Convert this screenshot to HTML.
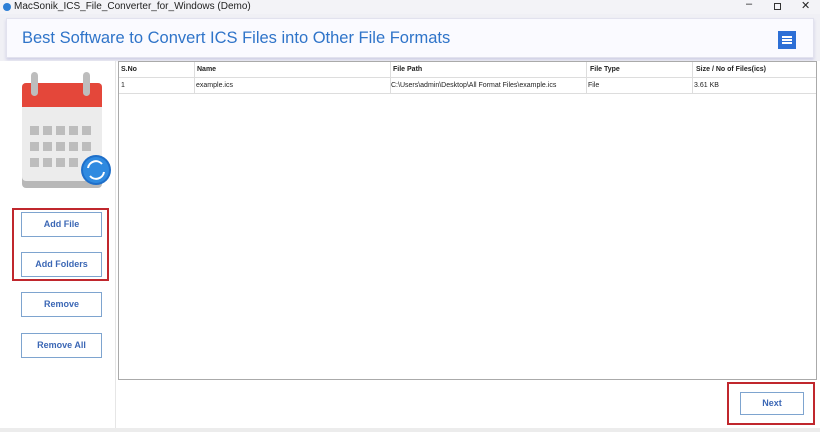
<!DOCTYPE html>
<html><head><style>
*{margin:0;padding:0;box-sizing:border-box}
body{width:820px;height:432px;background:#fff;font-family:"Liberation Sans",Arial,sans-serif;position:relative;overflow:hidden}
.top{position:absolute;left:0;top:0;width:820px;height:61px;background:#f0f0f5}
.tb{position:absolute;left:0;top:0;width:820px;height:14px;background:#f3f3f7;font-size:10px;color:#222}
.tb .t{position:absolute;left:14px;top:1px}
.hdr{position:absolute;left:6px;top:18px;width:808px;height:40px;background:#fafaff;border:1px solid #e2e2ee;box-shadow:0 2px 3px #cfcfe6}
.hdr .h{position:absolute;left:15px;top:10px;font-size:16.5px;color:#2f74c9}
.menu{position:absolute;left:771px;top:12px;width:18px;height:18px;background:#2d6fd6}
.left{position:absolute;left:3px;top:61px;width:113px;height:367px;background:#fff;border-right:1px solid #e6e6e6}
.btn{position:absolute;width:81px;height:25px;background:#fff;border:1px solid #7ea4cf;font-size:9px;font-weight:bold;color:#3b67b5;text-align:center;line-height:23px}
.red{position:absolute;border:2px solid #c0272d}
.tbl{position:absolute;left:118px;top:61px;width:699px;height:319px;background:#fff;border:1px solid #aaa}
.row{position:absolute;left:0;height:16px;width:697px;font-size:7px;color:#222;border-bottom:1px solid #ddd}
.row span{position:absolute;top:4px}
.hd span{font-weight:bold}
.vl{position:absolute;top:0;height:32px;width:1px;background:#ddd}
</style></head><body>
<div class="top"></div>
<div class="tb"><svg style="position:absolute;left:3px;top:3px" width="8" height="8"><circle cx="4" cy="4" r="4" fill="#2d7fd6"/></svg><span class="t">MacSonik_ICS_File_Converter_for_Windows (Demo)</span>
<span style="position:absolute;left:746px;top:-2px;font-size:11px">–</span>
<span style="position:absolute;left:774px;top:3px;width:7px;height:7px;border:1px solid #333"></span>
<span style="position:absolute;left:801px;top:-1px;font-size:11px">✕</span></div>
<div class="hdr"><div class="h">Best Software to Convert ICS Files into Other File Formats</div>
<div class="menu"><div style="position:absolute;left:4px;top:5px;width:10px;height:1.5px;background:#fff;box-shadow:0 3px 0 #fff,0 6px 0 #fff"></div></div></div>
<div class="left">
<svg style="position:absolute;left:16px;top:10px" width="92" height="120" viewBox="0 0 92 120">
<rect x="3" y="12" width="80" height="105" rx="4" fill="#b8b8b8"/>
<rect x="3" y="12" width="80" height="98" rx="4" fill="#ececec"/>
<path d="M3 16a4 4 0 0 1 4-4h72a4 4 0 0 1 4 4v20H3z" fill="#e4473a"/>
<rect x="3" y="32" width="80" height="4" fill="#e4473a"/>
<rect x="12" y="1" width="7" height="24" rx="3.5" fill="#bdbdbd"/>
<rect x="64" y="1" width="7" height="24" rx="3.5" fill="#bdbdbd"/>
<g fill="#bdbdbd">
<rect x="11" y="55" width="9" height="9"/><rect x="24" y="55" width="9" height="9"/><rect x="37" y="55" width="9" height="9"/><rect x="50" y="55" width="9" height="9"/><rect x="63" y="55" width="9" height="9"/>
<rect x="11" y="71" width="9" height="9"/><rect x="24" y="71" width="9" height="9"/><rect x="37" y="71" width="9" height="9"/><rect x="50" y="71" width="9" height="9"/><rect x="63" y="71" width="9" height="9"/>
<rect x="11" y="87" width="9" height="9"/><rect x="24" y="87" width="9" height="9"/><rect x="37" y="87" width="9" height="9"/><rect x="50" y="87" width="9" height="9"/></g>
<circle cx="77" cy="99" r="15" fill="#1f6fc9"/><circle cx="77" cy="99" r="13" fill="#2f8ae0"/>
<path d="M69 97a8 8 0 0 1 14-4M85 101a8 8 0 0 1-14 4" stroke="#fff" stroke-width="2" fill="none"/>
</svg>
<div class="red" style="left:9px;top:147px;width:97px;height:73px"></div>
<div class="btn" style="left:18px;top:151px">Add File</div>
<div class="btn" style="left:18px;top:191px">Add Folders</div>
<div class="btn" style="left:18px;top:231px">Remove</div>
<div class="btn" style="left:18px;top:272px">Remove All</div>
</div>
<div class="tbl">
<div class="row hd" style="top:0"><span style="left:2px">S.No</span><span style="left:78px">Name</span><span style="left:274px">File Path</span><span style="left:471px">File Type</span><span style="left:577px">Size / No of Files(ics)</span></div>
<div class="row" style="top:16px"><span style="left:2px">1</span><span style="left:77px">example.ics</span><span style="left:272px">C:\Users\admin\Desktop\All Format Files\example.ics</span><span style="left:469px">File</span><span style="left:575px">3.61 KB</span></div>
<div class="vl" style="left:75px"></div><div class="vl" style="left:271px"></div><div class="vl" style="left:467px"></div><div class="vl" style="left:573px"></div>
</div>
<div style="position:absolute;left:0;top:428px;width:820px;height:4px;background:#ececec"></div>
<div class="red" style="left:727px;top:382px;width:88px;height:43px"></div>
<div class="btn" style="left:740px;top:392px;width:64px;height:23px;line-height:21px">Next</div>
</body></html>
